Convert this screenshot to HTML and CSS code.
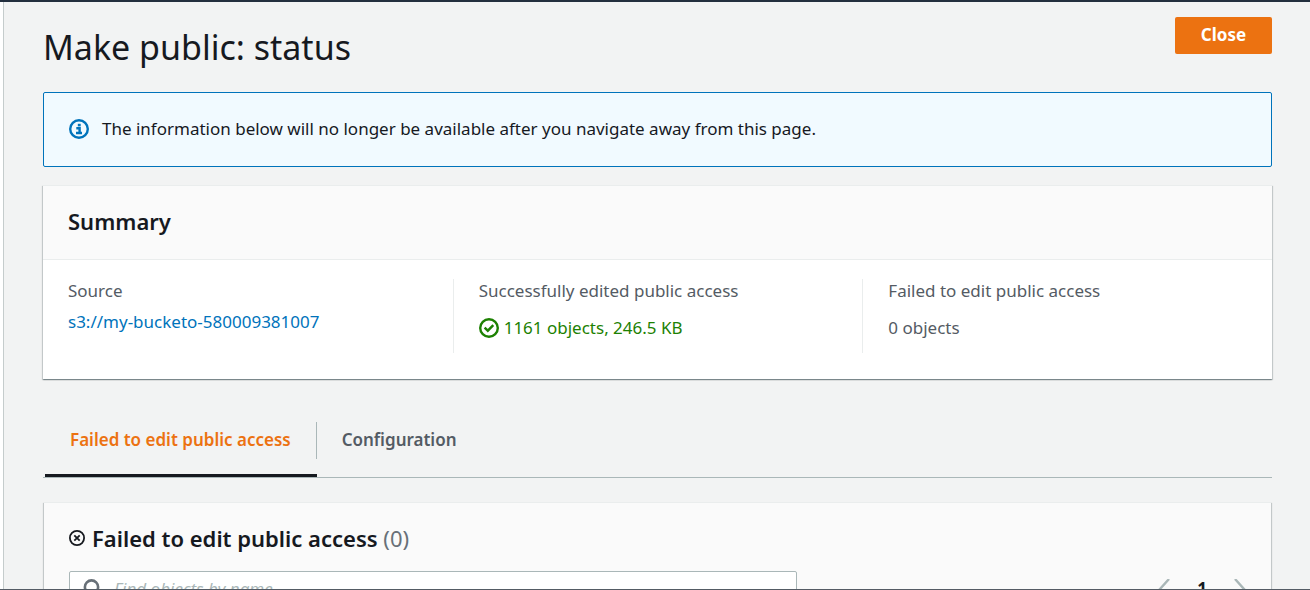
FILE: index.html
```html
<!DOCTYPE html>
<html lang="en">
<head>
<meta charset="utf-8">
<title>Make public: status</title>
<link rel="stylesheet" href="styles.css">
</head>
<body>
<div class="shell">
  <main class="content">
    <header class="page-header">
      <h1 class="page-title">Make public: status</h1>
      <button class="btn-primary" type="button">Close</button>
    </header>

    <div class="banner" role="status">
      <svg class="icon-20" viewBox="0 0 20 20" aria-hidden="true" fill="none" stroke="#0073bb">
        <circle cx="10" cy="10" r="8.8" stroke-width="2.4"/>
        <path d="M7.3 9.2h3.3v4.7M7 14h6" stroke-width="2.4"/>
        <path d="M8.8 6.1h2.9" stroke-width="2.6"/>
      </svg>
      <span>The information below will no longer be available after you navigate away from this page.</span>
    </div>

    <section class="card">
      <div class="card-header"><h2 class="card-title">Summary</h2></div>
      <dl class="summary">
        <div class="summary-item">
          <dt>Source</dt>
          <dd><a class="link" href="#">s3://my-bucketo-580009381007</a></dd>
        </div>
        <div class="summary-item summary-item-status">
          <dt>Successfully edited public access</dt>
          <dd class="success">
            <svg class="icon-20" viewBox="0 0 20 20" aria-hidden="true" fill="none" stroke="#1d8102">
              <circle cx="10" cy="10" r="8.8" stroke-width="2.4"/>
              <path d="M5.6 9.6l3.2 3.1 5.5-5.5" stroke-width="2.4"/>
            </svg>
            <span>1161 objects, 246.5 KB</span>
          </dd>
        </div>
        <div class="summary-item summary-item-status">
          <dt>Failed to edit public access</dt>
          <dd>0 objects</dd>
        </div>
      </dl>
    </section>

    <div class="tabs" role="tablist">
      <button class="tab tab-active" type="button" role="tab" aria-selected="true"><span class="tab-label">Failed to edit public access</span></button>
      <button class="tab" type="button" role="tab" aria-selected="false"><span class="tab-label">Configuration</span></button>
    </div>

    <section class="card card-list">
      <div class="list-title">
        <svg class="icon-16" viewBox="0 0 16 16" aria-hidden="true" fill="none" stroke="#16191f">
          <circle cx="8" cy="8" r="7.1" stroke-width="1.8"/>
          <path d="M5.3 5.3l5.4 5.4M10.7 5.3l-5.4 5.4" stroke-width="1.8"/>
        </svg>
        <h2 class="card-title">Failed to edit public access <span class="counter">(0)</span></h2>
      </div>
      <div class="toolbar">
        <label class="search">
          <svg class="icon-20" viewBox="0 0 20 20" aria-hidden="true" fill="none" stroke="#687078" stroke-width="2.6">
            <circle cx="9.5" cy="8" r="6.6"/>
            <path d="M14 13l5 6"/>
          </svg>
          <input class="search-input" type="text" placeholder="Find objects by name" aria-label="Find objects by name">
        </label>
        <nav class="pager" aria-label="Pages">
          <button class="pager-btn" type="button" aria-label="Previous page">
            <svg class="chevron" viewBox="0 0 12 20" aria-hidden="true" fill="none" stroke="#aab7b8" stroke-width="2.4"><path d="M11 0L2 10l9 10"/></svg>
          </button>
          <button class="pager-btn pager-current" type="button" aria-current="page">1</button>
          <button class="pager-btn" type="button" aria-label="Next page">
            <svg class="chevron" viewBox="0 0 12 20" aria-hidden="true" fill="none" stroke="#aab7b8" stroke-width="2.4"><path d="M1 0l9 10-9 10"/></svg>
          </button>
        </nav>
      </div>
    </section>
  </main>
</div>
</body>
</html>
```
FILE: styles.css
```css
* { box-sizing: border-box; }

body {
  margin: 0;
  background: #fff;
  color: #16191f;
  font-family: "Noto Sans", "Open Sans", sans-serif;
  font-size: 17px;
  line-height: 24px;
}

h1, h2, dl, dd { margin: 0; }

button, input { font: inherit; color: inherit; }

button {
  border: 0;
  background: none;
  padding: 0;
  cursor: pointer;
}

.shell {
  height: 100vh;
  overflow: hidden;
  border-top: 2px solid #232f3e;
  border-bottom: 1px solid #545b64;
  padding-left: 3px;
}

.content {
  min-height: 100%;
  border-left: 1px solid #c5cccc;
  background: #f2f3f3;
  padding: 15px 38px 40px 39px;
}

.page-header {
  display: flex;
  justify-content: space-between;
  align-items: flex-start;
  margin-bottom: 15px;
}

.page-title {
  font-size: 34px;
  font-weight: 400;
  line-height: 60px;
}

.btn-primary {
  min-width: 97px;
  padding: 6px 24px 7px;
  border-radius: 2px;
  background: #ec7211;
  color: #fff;
  font-weight: 700;
}

.icon-20 { width: 20px; height: 20px; flex: none; }
.icon-16 { width: 16px; height: 16px; flex: none; }

.banner {
  display: flex;
  align-items: center;
  gap: 13px;
  min-height: 75px;
  margin-bottom: 18px;
  padding: 23px 25px 25px;
  border: 1px solid #0073bb;
  border-radius: 2px;
  background: #f1faff;
}

.card {
  border-top: 1px solid #eaeded;
  background: #fff;
  box-shadow: 0 1px 1px 0 rgba(0, 28, 36, 0.3), 1px 1px 1px 0 rgba(0, 28, 36, 0.15), -1px 1px 1px 0 rgba(0, 28, 36, 0.15);
}

.card-header {
  padding: 21px 25px 24px;
  border-bottom: 1px solid #eaeded;
  background: #fafafa;
}

.card-title {
  font-size: 22px;
  font-weight: 600;
  line-height: 28px;
}

.summary {
  display: grid;
  grid-template-columns: repeat(3, 1fr);
  padding: 19px 0 26px;
  color: #545b64;
}

.summary-item {
  display: flex;
  flex-direction: column;
  gap: 7px;
  min-height: 74px;
  padding: 0 25px;
}

.summary-item-status {
  gap: 13px;
  border-left: 1px solid #eaeded;
}

.success {
  display: flex;
  align-items: center;
  gap: 5px;
  color: #1d8102;
}

.link { color: #0073bb; text-decoration: none; }

.tabs {
  display: flex;
  margin: 25px 0 24px;
  border-bottom: 1px solid #aab7b8;
}

.tab {
  padding: 18px 0 15px;
  border-bottom: 3px solid transparent;
  color: #545b64;
  font-weight: 600;
}

.tab-label {
  display: block;
  padding: 6px 25px 7px;
}

.tab-active {
  margin-left: 2px;
  border-bottom-color: #16191f;
  color: #ec7211;
}

.tab-active .tab-label { border-right: 1px solid #aab7b8; }

.card-list {
  margin: 0 1px;
  padding: 21px 25px;
  background: #fafafa;
}

.list-title {
  display: flex;
  align-items: center;
  gap: 7px;
  margin-bottom: 19px;
}

.counter { color: #687078; font-weight: 400; }

.toolbar {
  display: flex;
  justify-content: space-between;
  align-items: center;
}

.search {
  display: flex;
  flex: 0 1 728px;
  align-items: center;
  gap: 12px;
  padding: 5px 12px;
  border: 1px solid #aab7b8;
  border-radius: 2px;
  background: #fff;
}

.search-input {
  flex: 1;
  min-width: 0;
  padding: 0;
  border: 0;
  outline: 0;
  background: none;
}

.search-input::placeholder { color: #aab7b8; font-style: italic; opacity: 1; }

.pager { display: flex; align-items: center; gap: 27px; }
.pager-btn { display: flex; }
.pager-current { font-weight: 700; }
.chevron { width: 12px; height: 20px; }
```
